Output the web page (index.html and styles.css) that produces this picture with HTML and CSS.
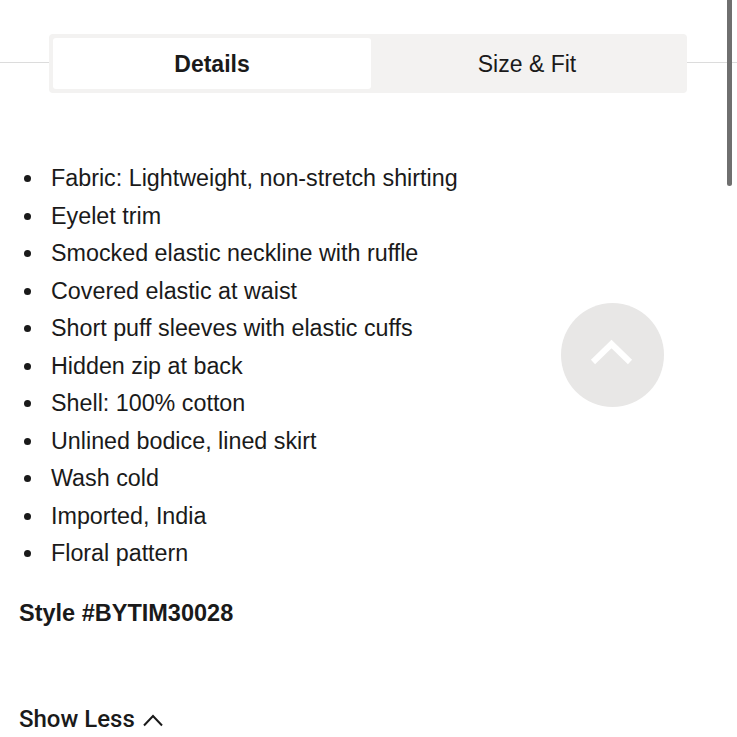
FILE: index.html
```html
<!DOCTYPE html>
<html lang="en">
<head>
    <meta charset="UTF-8">
    <meta name="viewport" content="width=device-width, initial-scale=1.0">
    <title>Product Details</title>
    <link rel="stylesheet" href="styles.css">
</head>
<body>
    <div class="scroll-thumb"></div>

    <div class="tabs-row">
        <div class="tabs">
            <button class="tab active">Details</button>
            <button class="tab">Size &amp; Fit</button>
        </div>
    </div>

    <ul class="details-list">
        <li>Fabric: Lightweight, non-stretch shirting</li>
        <li>Eyelet trim</li>
        <li>Smocked elastic neckline with ruffle</li>
        <li>Covered elastic at waist</li>
        <li>Short puff sleeves with elastic cuffs</li>
        <li>Hidden zip at back</li>
        <li>Shell: 100% cotton</li>
        <li>Unlined bodice, lined skirt</li>
        <li>Wash cold</li>
        <li>Imported, India</li>
        <li>Floral pattern</li>
    </ul>

    <p class="style-code">Style #BYTIM30028</p>

    <button class="show-less">
        Show Less
        <svg width="20" height="14" viewBox="0 0 20 14">
            <path d="M1 12.5 L10 3 L19 12.5" fill="none" stroke="#1a1a1a" stroke-width="2"/>
        </svg>
    </button>

    <button class="back-to-top" aria-label="Back to top">
        <svg width="103" height="104" viewBox="0 0 103 104">
            <path d="M32 59 L50.5 41 L69 59" fill="none" stroke="#fff" stroke-width="6"/>
        </svg>
    </button>
</body>
</html>
```

FILE: styles.css
```css
body {
    font-family: 'Liberation Sans', Arial, sans-serif;
    color: #1a1a1a;
    background-color: white;
    margin: 0;
    width: 737px;
    height: 737px;
    position: relative;
    overflow: hidden;
}

.scroll-thumb {
    position: absolute;
    top: -6px;
    left: 727px;
    width: 5px;
    height: 192px;
    border-radius: 3px;
    background-color: #6f6f6f;
}

.tabs-row {
    padding-top: 34px;
    background: linear-gradient(#dcdcdc, #dcdcdc) 0 62px / 100% 1px no-repeat;
}

.tabs {
    width: 638px;
    height: 59px;
    margin-left: 49px;
    box-sizing: border-box;
    padding: 4px;
    display: grid;
    grid-template-columns: 318px 1fr;
    background-color: #f3f2f1;
    border-radius: 4px;
}

.tab {
    font-family: inherit;
    font-size: 23px;
    color: #1a1a1a;
    border: none;
    background: none;
    border-radius: 3px;
    padding: 2px 0 0;
    cursor: pointer;
}

.tab.active {
    background-color: white;
    font-weight: bold;
}

.details-list {
    list-style: none;
    margin: 67px 0 0;
    padding: 0;
}

.details-list li {
    display: flex;
    align-items: center;
    font-size: 23.3px;
    line-height: 37.5px;
    white-space: nowrap;
}

.details-list li::before {
    content: "";
    width: 7px;
    height: 7px;
    border-radius: 50%;
    background-color: #1a1a1a;
    margin: 0 20px 0 24px;
}

.style-code {
    margin: 22px 0 0 19px;
    font-size: 23.5px;
    font-weight: bold;
    line-height: 37.5px;
}

.show-less {
    display: flex;
    align-items: center;
    gap: 8px;
    margin: 69px 0 0 19px;
    padding: 0;
    border: none;
    background: none;
    font-family: Roboto, 'Liberation Sans', sans-serif;
    font-size: 24px;
    font-weight: 500;
    line-height: 37.5px;
    color: #1a1a1a;
    cursor: pointer;
}

.back-to-top {
    position: absolute;
    left: 561px;
    top: 303px;
    width: 103px;
    height: 104px;
    padding: 0;
    border: none;
    border-radius: 50%;
    background-color: #e8e7e6;
    cursor: pointer;
}

.back-to-top svg {
    display: block;
}
```
